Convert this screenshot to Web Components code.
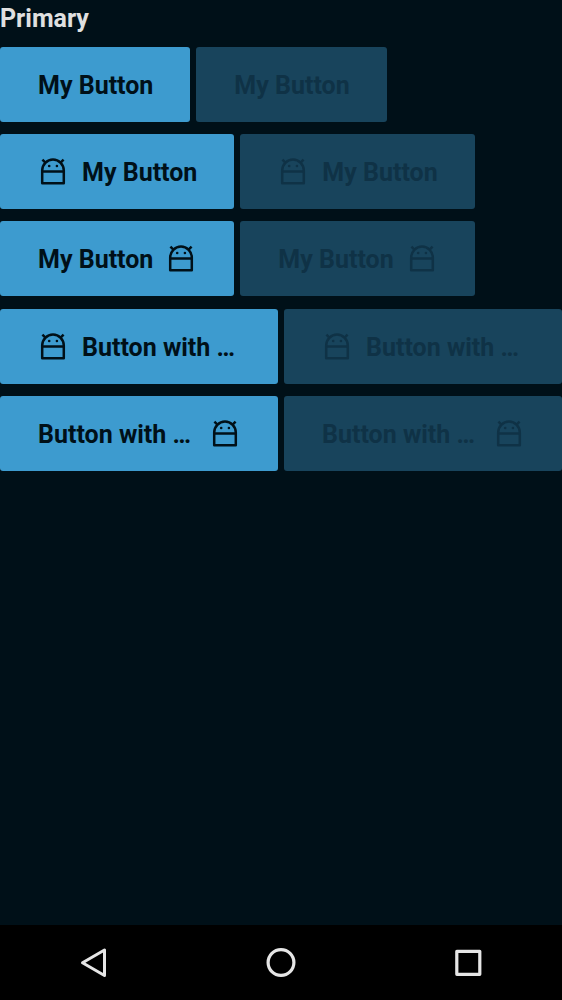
<!DOCTYPE html>
<html lang="en">
<head>
<meta charset="utf-8">
<meta name="viewport" content="width=device-width, initial-scale=1">
<title>Primary</title>
<style>
  html, body { margin: 0; }
  body { background: #001018; font-family: Roboto, sans-serif; color: #e0e0e0; }
</style>
</head>
<body>
<app-screen>
  <button-section heading="Primary">
    <button-row><my-button>My Button</my-button><my-button disabled>My Button</my-button></button-row>
    <button-row><my-button icon="start">My Button</my-button><my-button icon="start" disabled>My Button</my-button></button-row>
    <button-row><my-button icon="end">My Button</my-button><my-button icon="end" disabled>My Button</my-button></button-row>
  </button-section>
  <button-section>
    <button-row fill><my-button icon="start">Button with …</my-button><my-button icon="start" disabled>Button with …</my-button></button-row>
    <button-row fill><my-button icon="end">Button with …</my-button><my-button icon="end" disabled>Button with …</my-button></button-row>
  </button-section>
  <nav-bar slot="nav"></nav-bar>
</app-screen>

<script>
class Base extends HTMLElement {
  constructor() {
    super();
    this.attachShadow({ mode: 'open' });
  }
  connectedCallback() { this.shadowRoot.innerHTML = this.view(); }
}

customElements.define('app-screen', class extends Base {
  view() {
    return `<style>
      :host { display: flex; flex-direction: column; min-height: 100vh; }
      main { flex: 1; display: flex; flex-direction: column; gap: 13px; }
    </style>
    <main><slot></slot></main><slot name="nav"></slot>`;
  }
});

customElements.define('button-section', class extends Base {
  view() {
    const heading = this.getAttribute('heading');
    return `<style>
      :host { display: flex; flex-direction: column; gap: 12px; }
      h1 { margin: 0; padding: 4px 0 1px; font-size: 25px; line-height: 30px; font-weight: 700; }
    </style>
    ${heading ? `<h1>${heading}</h1>` : ''}<slot></slot>`;
  }
});

customElements.define('button-row', class extends Base {
  view() {
    return `<style>
      :host { display: flex; gap: 6px; }
      :host([fill]) ::slotted(*) { flex: 1; min-width: 0; }
    </style><slot></slot>`;
  }
});

customElements.define('android-icon', class extends Base {
  view() {
    return `<style>
      :host { display: block; flex: none; width: 31px; height: 31px; }
      svg { display: block; }
    </style>
    <svg width="31" height="31" viewBox="0 0 31 31" fill="none" stroke="currentColor" stroke-width="2.5" aria-hidden="true">
      <path d="M4.2 26.2V13.4a10.8 10.8 0 0 1 21.6 0v12.8z" stroke-linejoin="round"/>
      <path d="M4.2 14.4h21.6M7.4 5.6 4.4 2.6M22.6 5.6l3-3"/>
      <g fill="currentColor" stroke="none"><circle cx="11.2" cy="9" r="1.3"/><circle cx="18.9" cy="9" r="1.3"/></g>
    </svg>`;
  }
});

customElements.define('my-button', class extends Base {
  view() {
    const icon = this.getAttribute('icon');
    const glyph = '<android-icon></android-icon>';
    return `<style>
      :host { display: block; }
      button {
        display: flex; align-items: center; gap: 13px; width: 100%; height: 75px;
        margin: 0; padding: 2px 37px 0 38px; border: 0; border-radius: 3px;
        background: #3d9bcf; color: #001018;
        font: 700 25px/30px Roboto, sans-serif; text-align: left;
      }
      button:disabled { background: #18445c; color: #0f3246; }
      span { flex: 1; min-width: 0; white-space: nowrap; overflow: hidden; text-overflow: ellipsis; }
    </style>
    <button type="button" ${this.hasAttribute('disabled') ? 'disabled' : ''}>
      ${icon === 'start' ? glyph : ''}<span><slot></slot></span>${icon === 'end' ? glyph : ''}
    </button>`;
  }
});

customElements.define('nav-bar', class extends Base {
  view() {
    return `<style>
      :host { display: block; background: #000; }
      nav { display: grid; grid-template-columns: repeat(3, 1fr); height: 75px; }
      button { display: grid; place-items: center; margin: 0; padding: 0; border: 0; background: none; color: #e6e6e6; }
      svg { display: block; }
    </style>
    <nav aria-label="System">
      <button type="button" aria-label="Back"><svg width="32" height="32" viewBox="0 0 32 32" fill="none" stroke="currentColor" stroke-width="3" stroke-linejoin="round"><path d="M26.5 3v25.5L4.5 15.7z"/></svg></button>
      <button type="button" aria-label="Home"><svg width="32" height="32" viewBox="0 0 32 32" fill="none" stroke="currentColor" stroke-width="3.2"><circle cx="16" cy="15.5" r="12.9"/></svg></button>
      <button type="button" aria-label="Overview"><svg width="32" height="32" viewBox="0 0 32 32" fill="none" stroke="currentColor" stroke-width="3.2" stroke-linejoin="round"><path d="M4.8 4.3h23v23h-23z"/></svg></button>
    </nav>`;
  }
});
</script>
</body>
</html>
